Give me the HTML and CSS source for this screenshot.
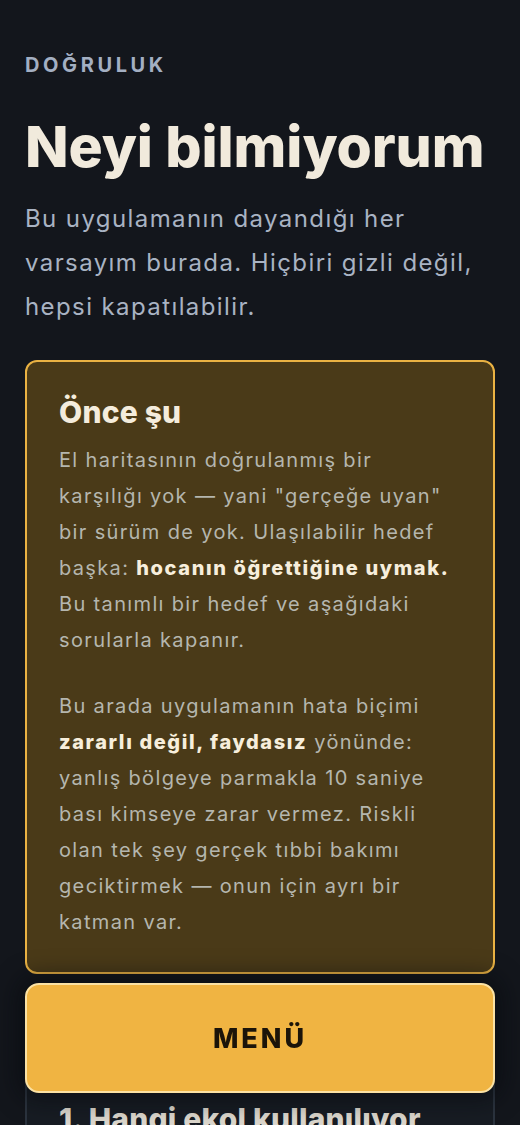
FILE: index.html
```html
<!DOCTYPE html>
<html lang="tr">
<head>
<meta charset="utf-8">
<title>Neyi bilmiyorum</title>
<link rel="stylesheet" href="styles.css">
</head>
<body>
<main class="page">
  <header class="intro">
    <p class="eyebrow">DOĞRULUK</p>
    <h1 class="title">Neyi bilmiyorum</h1>
    <p class="lead">Bu uygulamanın dayandığı her varsayım burada. Hiçbiri gizli değil, hepsi kapatılabilir.</p>
  </header>

  <section class="card card-warn">
    <h2 class="card-title">Önce şu</h2>
    <p class="card-text">El haritasının doğrulanmış bir karşılığı yok — yani "gerçeğe uyan" bir sürüm de yok. Ulaşılabilir hedef başka: <strong>hocanın öğrettiğine uymak.</strong> Bu tanımlı bir hedef ve aşağıdaki sorularla kapanır.</p>
    <p class="card-text">Bu arada uygulamanın hata biçimi <strong>zararlı değil, faydasız</strong> yönünde: yanlış bölgeye parmakla 10 saniye bası kimseye zarar vermez. Riskli olan tek şey gerçek tıbbi bakımı geciktirmek — onun için ayrı bir katman var.</p>
  </section>

  <section class="card card-question">
    <h2 class="q-title">1. Hangi ekol kullanılıyor</h2>
    <p class="card-text">Bu harita hangi geleneğe dayanıyor ve hoca hangi ekolü öğretiyor?</p>
  </section>
</main>

<div class="menu-bar">
  <button class="menu-btn" type="button">MENÜ</button>
</div>
</body>
</html>
```

FILE: styles.css
```css
* { box-sizing: border-box; }

html, body {
  margin: 0;
  padding: 0;
  background: #13161c;
}

body {
  font-family: Inter, "Noto Sans", "DejaVu Sans", sans-serif;
  color: #a9b3c3;
}

.page {
  padding: 53px 25px 160px;
}

.intro {
  display: flex;
  flex-direction: column;
}

.eyebrow {
  margin: 0;
  font-size: 20px;
  line-height: 24px;
  font-weight: 700;
  letter-spacing: 3.6px;
  color: #a3afc2;
}

.title {
  margin: 39px 0 0;
  font-size: 57px;
  line-height: 62px;
  font-weight: 800;
  letter-spacing: -0.1px;
  color: #f1eadc;
}

.lead {
  margin: 19px 0 0;
  font-size: 24px;
  line-height: 44px;
  letter-spacing: 1.4px;
  color: #a9b3c3;
}

.card {
  border-radius: 12px;
  padding: 32px;
}

.card-warn {
  margin-top: 31px;
  background: #4a3a18;
  border: 2px solid #eab243;
}

.card-title {
  margin: 0;
  font-size: 30px;
  line-height: 36px;
  font-weight: 800;
  letter-spacing: 0.2px;
  color: #f4ecdc;
}

.card-text {
  margin: 12px 0 0;
  font-size: 20px;
  line-height: 36px;
  letter-spacing: 1.35px;
  color: #b5b6ae;
}

.card-text + .card-text {
  margin-top: 30px;
}

.card-text strong {
  font-weight: 800;
  letter-spacing: 1.6px;
  color: #f7eedc;
}

.card-question {
  margin-top: 93px;
  background: #171c23;
  border: 2px solid #2b333e;
}

.q-title {
  margin: 0;
  font-size: 30px;
  line-height: 36px;
  font-weight: 800;
  letter-spacing: 0.2px;
  color: #dcd7cd;
}

.menu-bar {
  position: fixed;
  left: 0;
  right: 0;
  bottom: 32px;
  display: flex;
  padding: 0 25px;
}

.menu-btn {
  flex: 1;
  height: 110px;
  margin: 0;
  background: #f0b442;
  border: 2px solid #fbe2a4;
  border-radius: 14px;
  font-family: Inter, "Noto Sans", "DejaVu Sans", sans-serif;
  font-size: 27px;
  font-weight: 800;
  letter-spacing: 3px;
  color: #1b1409;
  box-shadow: 0 0 22px 8px rgba(6, 8, 12, 0.5);
  cursor: pointer;
}
```
